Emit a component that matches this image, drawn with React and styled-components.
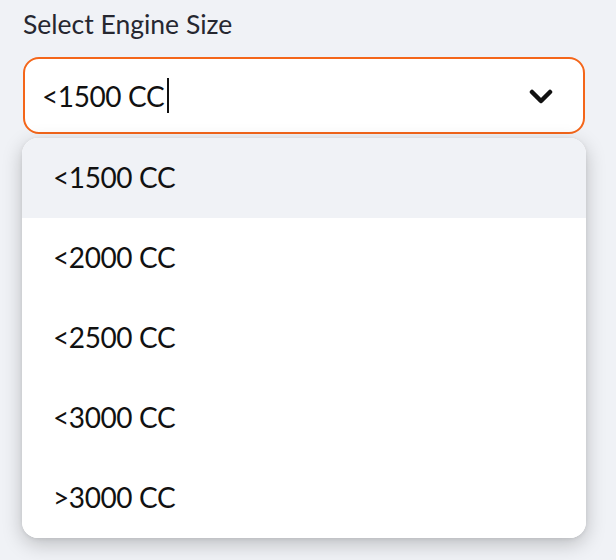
import { createGlobalStyle } from "styled-components";
import styled from "styled-components";

const GlobalStyle = createGlobalStyle`
body{
    margin:0;
    background-color:#f0f2f6;
    font-family:Lato, "Liberation Sans", sans-serif;
    color:#111;
}
`

const Page = styled.div`
position:relative;
box-sizing:border-box;
width:616px;
height:560px;
padding:8px 31px 0 23px;
`

const Label = styled.div`
font-size:26.5px;
line-height:32px;
color:#262730;
margin-bottom:17px;
`

const SelectBox = styled.div`
display:flex;
align-items:center;
box-sizing:border-box;
height:77px;
padding:0 30px 0 17px;
border:2px solid #f4661a;
border-radius:16px;
background-color:white;
font-size:28px;
letter-spacing:-0.4px;
.value{
    flex:1;
    display:flex;
    align-items:center;
}
.caret{
    display:inline-block;
    width:2px;
    height:35px;
    margin-left:3px;
    background-color:#111;
}
`

const Menu = styled.ul`
position:absolute;
top:138px;
left:22px;
width:564px;
height:400px;
margin:0;
padding:0;
list-style:none;
overflow:hidden;
border-radius:16px;
background-color:white;
box-shadow:0 6px 20px rgba(0,0,0,0.22), 0 1px 4px rgba(0,0,0,0.08);
`

const Option = styled.li`
display:flex;
align-items:center;
box-sizing:border-box;
height:80px;
padding:0 0 3px 31px;
font-size:28px;
letter-spacing:-0.4px;
color:#111;
background-color:${p => p.active ? "#f0f2f6" : "white"};
`

const options = ["<1500 CC", "<2000 CC", "<2500 CC", "<3000 CC", ">3000 CC"]

export default function App(){
    return <>
    <GlobalStyle/>
    <Page>
        <Label>Select Engine Size</Label>
        <SelectBox>
            <div className="value">
                <span>&lt;1500 CC</span>
                <span className="caret"></span>
            </div>
            <svg width="24" height="16" viewBox="0 0 24 16">
                <path d="M3 4 L12 13 L21 4" fill="none" stroke="#111" strokeWidth="4.5" strokeLinecap="round" strokeLinejoin="round"/>
            </svg>
        </SelectBox>
        <Menu>
            {options.map((o, i) => <Option key={o} active={i === 0}>{o}</Option>)}
        </Menu>
    </Page>
    </>
}
